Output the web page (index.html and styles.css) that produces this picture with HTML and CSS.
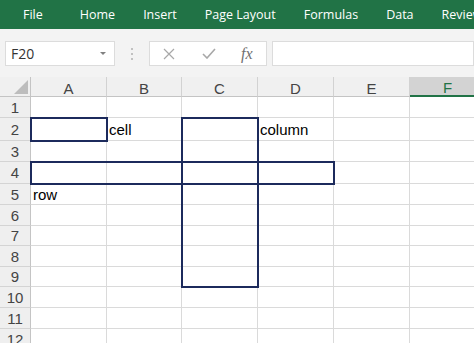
FILE: index.html
```html
<!DOCTYPE html>
<html lang="en">
<head>
    <meta charset="UTF-8">
    <meta name="viewport" content="width=device-width, initial-scale=1.0">
    <title>Book1 - Excel</title>
    <link rel="stylesheet" href="styles.css">
</head>
<body>
    <!-- Ribbon tabs -->
    <div class="tabs">
        <span class="tab file">File</span>
        <span class="tab">Home</span>
        <span class="tab">Insert</span>
        <span class="tab">Page Layout</span>
        <span class="tab">Formulas</span>
        <span class="tab">Data</span>
        <span class="tab">Review</span>
    </div>

    <!-- Name box + formula bar -->
    <div class="formula-bar">
        <div class="name-box">
            <span>F20</span>
            <span class="caret"></span>
        </div>
        <div class="grip"><i></i><i></i><i></i></div>
        <div class="fx-buttons">
            <svg class="cancel" width="12" height="12" viewBox="0 0 12 12">
                <path d="M1 1 L11 11 M11 1 L1 11" stroke="#a8a8a8" stroke-width="1.2" fill="none"/>
            </svg>
            <svg class="enter" width="14" height="11" viewBox="0 0 14 11">
                <path d="M1 6 L5 10 L13 1" stroke="#a8a8a8" stroke-width="1.6" fill="none"/>
            </svg>
            <span class="fx">fx</span>
        </div>
        <div class="formula-input"></div>
    </div>

    <!-- Worksheet grid -->
    <div class="sheet" id="sheet">
        <div class="cell corner"><span class="triangle"></span></div>
    </div>

    <script>
        const columns = ['A', 'B', 'C', 'D', 'E', 'F'];
        const selectedColumn = 'F';
        const values = { 'B2': 'cell', 'D2': 'column', 'A5': 'row' };
        const rowCount = 12;
        const sheet = document.getElementById('sheet');

        function addCell(className, text, row, col) {
            const cell = document.createElement('div');
            cell.className = 'cell ' + className;
            cell.textContent = text;
            cell.style.gridRow = row;
            cell.style.gridColumn = col;
            sheet.appendChild(cell);
        }

        // Column headers
        columns.forEach((name, i) => {
            addCell(name === selectedColumn ? 'col-head selected' : 'col-head', name, 1, i + 2);
        });

        // Rows
        for (let r = 1; r <= rowCount; r++) {
            addCell('row-head', r, r + 1, 1);
            columns.forEach((name, i) => {
                addCell('', values[name + r] || '', r + 1, i + 2);
            });
        }

        // Outlines drawn over the grid
        ['outline-cell', 'outline-row', 'outline-col'].forEach(name => {
            const box = document.createElement('div');
            box.className = 'outline ' + name;
            sheet.appendChild(box);
        });
    </script>
</body>
</html>
```

FILE: styles.css
```css
body {
    margin: 0;
    font-family: 'Open Sans', sans-serif;
    background-color: white;
    overflow: hidden;
}

.tabs {
    display: flex;
    align-items: center;
    gap: 28px;
    height: 29px;
    padding-left: 23px;
    background-color: #217346;
    color: white;
    font-size: 12.5px;
    white-space: nowrap;
}

.tabs .file {
    margin-right: 9px;
}

.formula-bar {
    display: flex;
    align-items: flex-start;
    height: 48px;
    box-sizing: border-box;
    padding: 12px 0 0 5px;
    background-color: #f3f3f3;
}

.name-box {
    width: 110px;
    height: 25px;
    box-sizing: border-box;
    display: flex;
    align-items: center;
    justify-content: space-between;
    padding: 0 8px 0 5px;
    background-color: white;
    border: 1px solid #dcdcdc;
    font-size: 14px;
    color: #333;
}

.caret {
    border-left: 3px solid transparent;
    border-right: 3px solid transparent;
    border-top: 3px solid #808080;
}

.grip {
    width: 34px;
    height: 25px;
    box-sizing: border-box;
    display: flex;
    flex-direction: column;
    align-items: center;
    gap: 3px;
    padding-top: 7px;
}

.grip i {
    width: 2px;
    height: 2px;
    border-radius: 50%;
    background-color: #b0b0b0;
}

.fx-buttons {
    width: 118px;
    height: 25px;
    box-sizing: border-box;
    display: flex;
    align-items: center;
    padding-left: 13px;
    background-color: white;
    border: 1px solid #dcdcdc;
}

.enter {
    margin-left: 27px;
}

.fx {
    margin-left: 25px;
    font-family: 'Liberation Serif', serif;
    font-style: italic;
    font-size: 16px;
    color: #707070;
}

.formula-input {
    flex: 1;
    height: 25px;
    margin-left: 5px;
    box-sizing: border-box;
    background-color: white;
    border: 1px solid #dcdcdc;
}

.sheet {
    display: grid;
    grid-template-columns: 31px 76px 75px 76px 76px 76px 76px;
    grid-template-rows: 20px 21px 23px 21px 22px 21px 21px 20px 21px 20px 21px 21px 21px;
}

.cell {
    box-sizing: border-box;
    display: flex;
    align-items: center;
    padding: 1px 0 0 2px;
    border-right: 1px solid #dadada;
    border-bottom: 1px solid #dadada;
    font-family: 'Liberation Sans', Arial, sans-serif;
    font-size: 15px;
    color: black;
    white-space: nowrap;
}

.corner {
    grid-row: 1;
    grid-column: 1;
    align-items: flex-end;
    justify-content: flex-end;
    padding: 0 2px 2px 0;
    background-color: #f0f0f0;
    border-right-color: #c4c4c4;
    border-bottom-color: #c4c4c4;
}

.triangle {
    width: 14px;
    height: 14px;
    background-color: #bdbdbd;
    clip-path: polygon(100% 0, 100% 100%, 0 100%);
}

.col-head {
    justify-content: center;
    padding: 3px 0 0 0;
    background-color: #f0f0f0;
    border-right-color: #d2d2d2;
    border-bottom-color: #c4c4c4;
    color: #444;
}

.col-head.selected {
    background-color: #d3d3d3;
    border-bottom: 2px solid #217346;
    color: #217346;
}

.row-head {
    justify-content: center;
    padding: 0;
    background-color: #efefef;
    border-right-color: #c4c4c4;
    border-bottom-color: #d4d4d4;
    color: #444;
}

.outline {
    box-sizing: border-box;
    margin: -1px;
    border: 2px solid #1c2a5c;
    z-index: 1;
}

.outline-cell {
    grid-row: 3;
    grid-column: 2;
}

.outline-row {
    grid-row: 5;
    grid-column: 2 / 6;
}

.outline-col {
    grid-row: 3 / 11;
    grid-column: 4;
}
```
